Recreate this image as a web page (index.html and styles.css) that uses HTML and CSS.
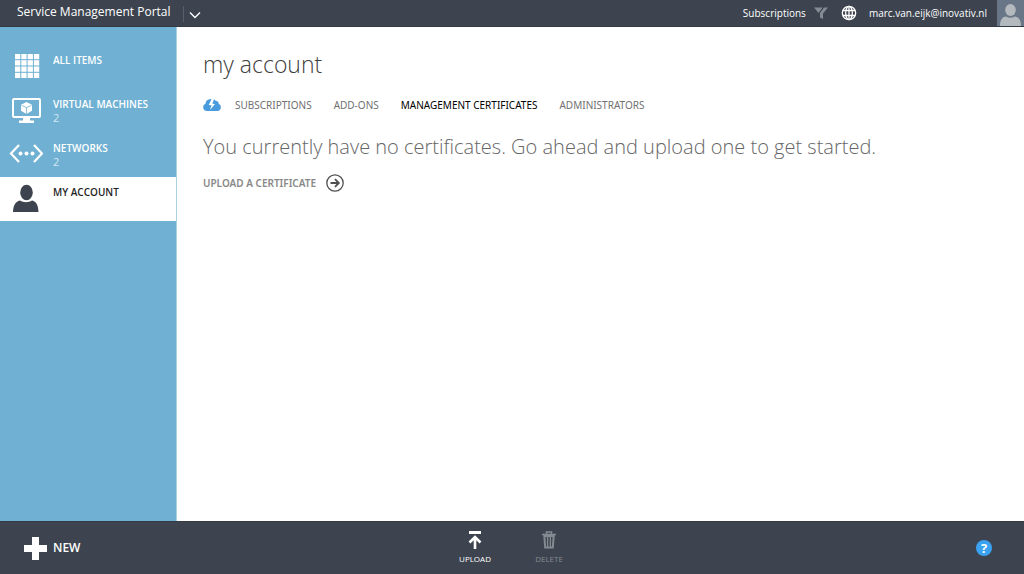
FILE: index.html
```html
<!DOCTYPE html>
<html lang="en">
<head>
<meta charset="utf-8">
<meta name="viewport" content="width=device-width, initial-scale=1">
<title>Service Management Portal</title>
<link rel="stylesheet" href="styles.css">
</head>
<body class="portal">
<header class="topbar">
  <span class="brand">Service Management Portal</span>
  <button class="icon-button expand" type="button" aria-label="Expand menu">
    <svg width="12" height="8" viewBox="0 0 12 8"><path d="M1 1.500l5 5 5-5" fill="none" stroke="#fff" stroke-width="1.400"/></svg>
  </button>
  <div class="session">
    <button class="filter" type="button">Subscriptions
      <svg width="14" height="13" viewBox="0 0 14 13"><path d="M0 .5h8.500L5.500 4.800 4.500 6z" fill="#858b93"/><path d="M10 .5h4L9 6.500V12l-3-1.500V6z" fill="#858b93"/></svg>
    </button>
    <button class="icon-button" type="button" aria-label="Language">
      <svg width="16" height="16" viewBox="0 0 16 16" fill="none" stroke="#fff" stroke-width="1.300"><circle cx="8" cy="8" r="6.700"/><ellipse cx="8" cy="8" rx="3.300" ry="6.700"/><path d="M8 1.300v13.400M2 5.500h12M2 10.500h12"/></svg>
    </button>
    <a class="user" href="#">marc.van.eijk@inovativ.nl</a>
    <svg class="avatar" width="27" height="26" viewBox="0 0 27 26"><path fill="#697687" d="M0 0h27v26H0z"/><ellipse cx="13.500" cy="10" rx="5.300" ry="6" fill="#b4b9be"/><path d="M3 26c0-6 2-9 6-9.500 3 1.800 6 1.800 9 0 4 .5 6 3.500 6 9.500z" fill="#b4b9be"/></svg>
  </div>
</header>
<div class="workspace">
  <nav class="sidebar" aria-label="Services">
    <a class="service" href="#">
      <svg class="service-icon" width="34" height="30" viewBox="0 0 34 30"><path d="M6 3h5.300v24H6zM12.300 3h5.300v24h-5.300zM18.600 3h5.300v24h-5.300zM24.900 3h5.300v24h-5.300z" fill="#fff"/><path d="M6 8.700h25M6 15h25M6 21.300h25" stroke="#70b1d3"/></svg>
      <span class="service-text"><span class="service-name">ALL ITEMS</span></span>
    </a>
    <a class="service" href="#">
      <svg class="service-icon" width="34" height="30" viewBox="0 0 34 30"><rect x="4" y="4" width="27" height="18" rx="1" fill="none" stroke="#fff" stroke-width="2"/><path d="M14 22h7v3.500h4V28H10v-2.500h4z" fill="#fff"/><path d="M17.500 7l5.500 2.800v6L17.500 19 12 15.800v-6z" fill="#fff"/><path d="M12.500 10.300l5 2.400 5-2.400M17.500 12.700V19" fill="none" stroke="#70b1d3" stroke-width=".8"/></svg>
      <span class="service-text"><span class="service-name">VIRTUAL MACHINES</span><span class="service-count">2</span></span>
    </a>
    <a class="service" href="#">
      <svg class="service-icon" width="34" height="30" viewBox="0 0 34 30"><path d="M10 6L2 14.500 10 23M25 6l8 8.500L25 23" fill="none" stroke="#fff" stroke-width="2.200"/><g fill="#fff"><circle cx="11.500" cy="14.500" r="2"/><circle cx="17.500" cy="14.500" r="2"/><circle cx="23.500" cy="14.500" r="2"/></g></svg>
      <span class="service-text"><span class="service-name">NETWORKS</span><span class="service-count">2</span></span>
    </a>
    <a class="service service-active" href="#" aria-current="page">
      <svg class="service-icon" width="34" height="30" viewBox="0 0 34 30" fill="#3d444f"><ellipse cx="17.500" cy="9.500" rx="6.300" ry="7.700"/><path d="M4 29c.3-6 2-10.500 7-11.500 3.700 2.300 8.300 2.300 12 0 5 1 6.200 5.500 6.500 11.500z"/></svg>
      <span class="service-text"><span class="service-name">MY ACCOUNT</span></span>
    </a>
  </nav>
  <main class="content">
    <h1 class="heading">my account</h1>
    <nav class="tabs" aria-label="Account">
      <svg class="cloud" width="18" height="13" viewBox="0 0 18 13"><path d="M4 12A3.800 3.800 0 0 1 2.500 4.700 4.500 4.500 0 0 1 7 .3c2-.8 4.500-.2 5.500 1.500 2 0 3.300 1.300 3.300 3.100 3 1.200 2.700 6.300-.8 7.100z" fill="#4a9ade"/><path d="M8.500 0L5.800 6l2.700.3L7 11l5-6-2.600-.3L11 0z" fill="#fff"/></svg>
      <a class="tab" href="#">SUBSCRIPTIONS</a>
      <a class="tab" href="#">ADD-ONS</a>
      <a class="tab tab-active" href="#" aria-current="page">MANAGEMENT CERTIFICATES</a>
      <a class="tab" href="#">ADMINISTRATORS</a>
    </nav>
    <p class="message">You currently have no certificates. Go ahead and upload one to get started.</p>
    <a class="upload-link" href="#">UPLOAD A CERTIFICATE
      <svg width="18" height="18" viewBox="0 0 18 18" fill="none" stroke="#505050"><circle cx="9" cy="9" r="8.200" stroke-width="1.300"/><path d="M4.500 9h8M9 5.200L12.800 9 9 12.800" stroke-width="1.800"/></svg>
    </a>
  </main>
</div>
<footer class="commandbar">
  <button class="new" type="button">
    <svg width="23" height="23" viewBox="0 0 23 23"><path d="M8 0h7v8h8v7h-8v8H8v-8H0V8h8z" fill="#fff"/></svg>
    NEW
  </button>
  <div class="commands">
    <button class="command" type="button">
      <svg width="14" height="19" viewBox="0 0 14 19"><path d="M1 0h12v3H1z" fill="#fff"/><path d="M7 18V6M1.500 11.500L7 6l5.500 5.500" fill="none" stroke="#fff" stroke-width="2.600"/></svg>
      UPLOAD
    </button>
    <button class="command" type="button" disabled>
      <svg width="14" height="19" viewBox="0 0 14 19" fill="none" stroke="#858a91"><path d="M0 3.500h14M4.500 3V1h5v2" stroke-width="1.500"/><path d="M2.300 5l.9 11.500h7.600L11.700 5z" stroke-width="2"/><path d="M5.600 5v11M8.400 5v11" stroke-width="1.300"/></svg>
      DELETE
    </button>
  </div>
  <button class="help" type="button" aria-label="Help">?</button>
</footer>
</body>
</html>
```
FILE: styles.css
```css
* { box-sizing: border-box; }

.portal {
  margin: 0;
  min-height: 100vh;
  display: flex;
  flex-direction: column;
  background: #fff;
  font-family: "Open Sans", "Noto Sans", sans-serif;
  font-size: 10px;
  line-height: 16px;
}

a { color: inherit; text-decoration: none; }

button {
  margin: 0;
  padding: 0;
  border: 0;
  background: none;
  color: inherit;
  font: inherit;
}

svg { display: block; flex: none; }

.topbar {
  display: flex;
  align-items: flex-start;
  height: 27px;
  padding-left: 17px;
  border-bottom: 1px solid #343a44;
  background: #3d444f;
  color: #fff;
}

.brand { padding-top: 4px; font-size: 12px; }

.icon-button { display: flex; }

.expand {
  height: 16px;
  margin: 6px 0 0 12px;
  padding: 5px 0 0 5px;
  border-left: 1px solid #596069;
}

.session {
  display: flex;
  align-items: center;
  height: 26px;
  margin-left: auto;
}

.filter {
  display: flex;
  align-items: center;
  gap: 8px;
  margin-right: 13px;
}

.user { margin: 0 10px 0 12px; }

.workspace { display: flex; flex: 1; }

.sidebar {
  width: 177px;
  flex: none;
  padding-top: 18px;
  border-right: 1px solid #a9d0e4;
  background: #70b1d3;
  color: #fff;
}

.service {
  display: flex;
  height: 44px;
  padding: 5px 0 0 9px;
  gap: 10px;
}

.service-icon { margin-top: 1px; }

.service-text { display: flex; flex-direction: column; padding-top: 3px; line-height: 14px; }

.service-name { font-weight: 600; }

.service-count { color: #d3e8f2; font-size: 11px; }

.service-active { background: #fff; color: #1f1f1f; }

.content { flex: 1; padding: 19px 26px; }

.heading {
  margin: 0;
  color: #404040;
  font-size: 23px;
  font-weight: 300;
  line-height: 36px;
}

.tabs {
  display: flex;
  align-items: center;
  gap: 22px;
  margin-top: 15px;
  color: #707070;
  font-family: "Noto Sans", sans-serif;
}

.cloud { margin-right: -8px; }

.tab-active { color: #000; }

.message {
  margin: 18px 0 0;
  color: #666;
  font-size: 20px;
  font-weight: 300;
  line-height: 32px;
}

.upload-link {
  display: inline-flex;
  align-items: center;
  gap: 10px;
  margin-top: 11px;
  color: #888;
  font-family: "Noto Sans", sans-serif;
  font-weight: 600;
}

.commandbar {
  display: grid;
  grid-template-columns: 1fr auto 1fr;
  align-items: center;
  height: 53px;
  padding: 0 24px;
  border-top: 1px solid #343a44;
  background: #3d444f;
  color: #fff;
}

.new {
  display: flex;
  align-items: center;
  justify-self: start;
  gap: 6px;
  font-size: 12px;
  font-weight: 600;
}

.commands { display: flex; gap: 36px; }

.command {
  display: flex;
  flex-direction: column;
  align-items: center;
  min-width: 38px;
  gap: 3px;
  font-size: 8px;
  line-height: 12px;
}

.command:disabled { color: #858a91; }

.help {
  justify-self: end;
  width: 16px;
  height: 16px;
  margin-right: 8px;
  border-radius: 50%;
  background: #3ba2f2;
  font-size: 13px;
  font-weight: 700;
}
```
